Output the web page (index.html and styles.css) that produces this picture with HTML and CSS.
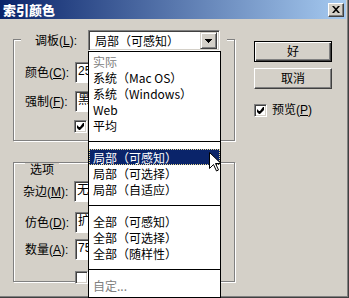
FILE: index.html
```html
<!DOCTYPE html>
<html lang="zh-CN">
<head>
    <meta charset="UTF-8">
    <title>索引颜色</title>
    <link rel="stylesheet" href="styles.css">
</head>
<body>
    <div class="window">
        <div class="titlebar">
            <span class="title">索引颜色</span>
            <span class="close-btn">
                <svg width="8" height="7" viewBox="0 0 8 7"><path d="M0 0h2l2 2.2L6 0h2L5 3.5 8 7H6L4 4.8 2 7H0l3-3.5z" fill="#000"/></svg>
            </span>
        </div>

        <div class="dialog">
            <div class="left">
                <!-- palette group, the combo sits on the top border -->
                <div class="group palette-group">
                    <div class="legend-row">
                        <span class="label palette-label">调板(<u>L</u>):</span>
                        <div class="field combo palette-combo">
                            <span class="combo-text">局部（可感知）</span>
                            <span class="drop-btn">
                                <svg width="7" height="4" viewBox="0 0 7 4"><path d="M0 0h7v1H6v1H5v1H4v1H3V3H2V2H1V1H0z" fill="#000"/></svg>
                            </span>
                        </div>
                    </div>
                    <div class="row colors-row">
                        <span class="label">颜色(<u>C</u>):</span>
                        <div class="field">25</div>
                    </div>
                    <div class="row forced-row">
                        <span class="label">强制(<u>F</u>):</span>
                        <div class="field">黑</div>
                    </div>
                    <div class="row check-row">
                        <span class="check checked">
                            <svg width="7" height="7" viewBox="0 0 7 7"><path d="M6 0h1v3L3 7H2L0 5V2l2 2h1z" fill="#000"/></svg>
                        </span>
                    </div>
                </div>

                <div class="group options-group">
                    <div class="group-title">选项</div>
                    <div class="row matte-row">
                        <span class="label">杂边(<u>M</u>):</span>
                        <div class="field">无</div>
                    </div>
                    <div class="row dither-row">
                        <span class="label">仿色(<u>D</u>):</span>
                        <div class="field">扩</div>
                    </div>
                    <div class="row amount-row">
                        <span class="label">数量(<u>A</u>):</span>
                        <div class="field">75</div>
                    </div>
                    <div class="row check-row2">
                        <span class="check"></span>
                    </div>
                </div>
            </div>

            <div class="right">
                <div class="btn btn-default">好</div>
                <div class="btn">取消</div>
                <div class="preview">
                    <span class="check checked">
                        <svg width="7" height="7" viewBox="0 0 7 7"><path d="M6 0h1v3L3 7H2L0 5V2l2 2h1z" fill="#000"/></svg>
                    </span>
                    <span>预览(<u>P</u>)</span>
                </div>
            </div>
        </div>

        <!-- open list of the palette combo -->
        <div class="dropdown">
            <div class="item disabled">实际</div>
            <div class="item">系统（Mac OS）</div>
            <div class="item">系统（Windows）</div>
            <div class="item">Web</div>
            <div class="item">平均</div>
            <div class="sep"></div>
            <div class="item selected">局部（可感知）</div>
            <div class="item">局部（可选择）</div>
            <div class="item">局部（自适应）</div>
            <div class="sep"></div>
            <div class="item">全部（可感知）</div>
            <div class="item">全部（可选择）</div>
            <div class="item">全部（随样性）</div>
            <div class="sep"></div>
            <div class="item disabled">自定...</div>
        </div>

        <svg class="cursor" width="13" height="20" viewBox="0 0 13 20">
            <path d="M0.5 0.5v16l4-4 3 6.5 2-1-3-6.5h5.5z" fill="#fff" stroke="#000" stroke-width="1"/>
        </svg>
    </div>
</body>
</html>
```

FILE: styles.css
```css
* { margin: 0; padding: 0; box-sizing: border-box; }
body { background-color: #d4d0c8; color: #000; font-family: "Liberation Sans", "Noto Sans CJK SC", sans-serif; font-size: 12px; line-height: 14px; overflow: hidden; }
u { text-decoration: underline; text-underline-offset: 1px; }

.window { position: relative; width: 349px; height: 298px; background-color: #d4d0c8; box-shadow: inset -1px -1px 0 #404040, inset -2px -2px 0 #808080; }
.titlebar { height: 19px; margin-right: 3px; padding-left: 3px; display: flex; align-items: center; justify-content: space-between; background: linear-gradient(to right, #0a246a, #a6caf0); }
.title { color: #fff; font-family: "Noto Sans CJK SC", sans-serif; font-weight: 900; font-size: 13px; line-height: 19px; }
.close-btn { width: 16px; height: 14px; margin-right: 2px; display: flex; align-items: center; justify-content: center; background-color: #d4d0c8; border: 1px solid; border-color: #fff #404040 #404040 #fff; box-shadow: inset -1px -1px 0 #808080; }

.dialog { display: flex; margin-top: 1px; }
.left { width: 222px; margin-left: 13px; padding-top: 19px; }
.right { width: 78px; margin-left: 19px; padding-top: 21px; }

.group { border: 1px solid #808080; box-shadow: inset 1px 1px 0 #fff, 1px 1px 0 #fff; }
.palette-group { height: 102px; }
.options-group { height: 120px; margin-top: 21px; }

.legend-row { display: flex; align-items: center; width: 206px; height: 21px; margin: -10px 0 0 7px; background-color: #d4d0c8; }
.palette-label { width: 67px; padding-left: 14px; }
.group-title { display: inline-block; margin: -8px 0 0 11px; padding: 0 5px; background-color: #d4d0c8; line-height: 14px; }

.row { display: flex; align-items: center; height: 21px; padding-left: 11px; }
.row .label { width: 50px; }
.colors-row { margin-top: 11px; }
.forced-row { margin-top: 8px; }
.check-row { height: 13px; margin-top: 8px; padding-left: 60px; }
.matte-row { margin-top: 4px; padding-left: 9px; }
.matte-row .label { width: 51px; }
.dither-row { margin-top: 10px; }
.amount-row { margin-top: 6px; }
.check-row2 { height: 13px; margin-top: 11px; padding-left: 61px; }

/* fields run under the open list, only their left end shows */
.field { width: 16px; height: 21px; padding-left: 2px; line-height: 17px; background-color: #fff; border: 1px solid; border-color: #808080 #fff #fff #808080; box-shadow: inset 1px 1px 0 #404040; white-space: nowrap; overflow: hidden; }
.combo { display: flex; align-items: center; justify-content: space-between; padding: 2px; box-shadow: inset 1px 1px 0 #404040, inset -1px -1px 0 #d4d0c8; }
.palette-combo { width: 132px; }
.combo-text { padding-left: 4px; font-family: "Noto Sans CJK SC", sans-serif; line-height: 17px; }
.drop-btn { width: 17px; height: 17px; display: flex; align-items: center; justify-content: center; background-color: #d4d0c8; border: 1px solid; border-color: #d4d0c8 #404040 #404040 #d4d0c8; box-shadow: inset 1px 1px 0 #fff, inset -1px -1px 0 #808080; }

.check { width: 13px; height: 13px; flex: none; display: flex; align-items: center; justify-content: center; background-color: #fff; border: 1px solid; border-color: #808080 #fff #fff #808080; box-shadow: inset 1px 1px 0 #404040, inset -1px -1px 0 #d4d0c8; }

.btn { width: 78px; height: 21px; display: flex; align-items: center; justify-content: center; background-color: #d4d0c8; border: 1px solid; border-color: #fff #404040 #404040 #fff; box-shadow: inset -1px -1px 0 #808080; }
.btn + .btn { margin-top: 6px; }
.btn-default { border-color: #000; box-shadow: inset 1px 1px 0 #fff, inset -1px -1px 0 #404040, inset -2px -2px 0 #808080; }
.preview { display: flex; align-items: center; margin-top: 14px; gap: 5px; }

.dropdown { position: absolute; left: 88px; top: 51px; width: 133px; height: 247px; padding-top: 1px; background-color: #fff; border: 1px solid #000; font-family: "Noto Sans CJK SC", sans-serif; overflow: hidden; }
.item { height: 16px; padding-left: 4px; line-height: 18px; white-space: nowrap; }
.item.disabled { color: #808080; }
.item.selected { color: #fff; background-color: #0a246a; border: 1px dotted #e8d890; padding-left: 3px; line-height: 15px; }
.sep { height: 9px; margin-bottom: 7px; border-bottom: 1px solid #000; }

.cursor { position: absolute; left: 209px; top: 152px; }
```
